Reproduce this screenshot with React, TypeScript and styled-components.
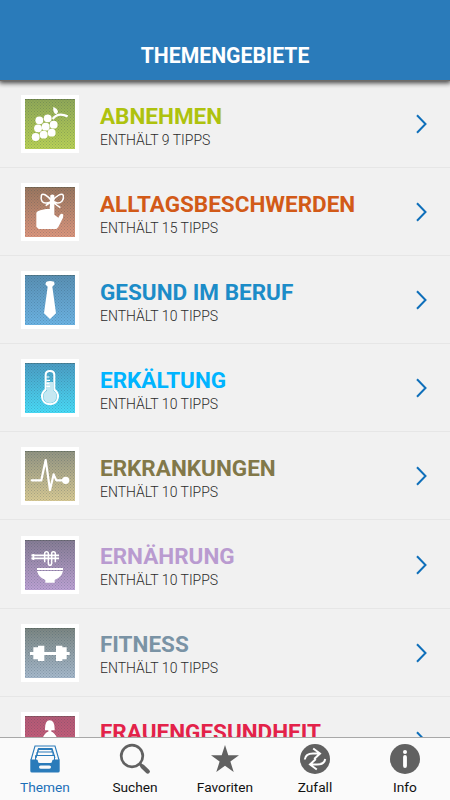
import React from "react";
import styled, { createGlobalStyle } from "styled-components";

const GlobalStyle = createGlobalStyle`
  body { margin: 0; background: #f1f1f1; font-family: Roboto, "Liberation Sans", sans-serif; }
  * { box-sizing: border-box; }
`;

const Screen = styled.div`
  width: 450px;
  height: 800px;
  display: flex;
  flex-direction: column;
  overflow: hidden;
  background: #f1f1f1;
`;

const Header = styled.header`
  flex: none;
  height: 80px;
  padding-top: 42px;
  background: #2a7bba;
  color: #fff;
  text-align: center;
  font-size: 21.2px;
  line-height: 28px;
  font-weight: 700;
  z-index: 1;
  box-shadow: 0 1px 0 #6e6b68, 0 2px 5px 1px rgba(0, 0, 0, 0.75);
`;

const List = styled.main`
  flex: 1;
  min-height: 0;
  overflow: hidden;
`;

const Row = styled.div`
  height: 88.1px;
  display: flex;
  align-items: center;
  padding: 1px 21px 0;
  border-bottom: 1px solid #e6e6e6;
`;

const Tile = styled.svg`
  display: block;
  flex: none;
  width: 58px;
  height: 58px;
`;

const Labels = styled.div`
  flex: 1;
  padding: 4px 0 0 21px;
  white-space: nowrap;
`;

const Title = styled.div<{ $color: string }>`
  color: ${(p) => p.$color};
  font-size: 22.5px;
  line-height: 26px;
  font-weight: 700;
  margin-bottom: 1px;
`;

const Count = styled.div`
  color: #2c2c2c;
  font-size: 14px;
  line-height: 20px;
  font-weight: 300;
`;

const Chevron = styled.svg`
  display: block;
  flex: none;
  width: 14px;
  height: 20px;
  fill: none;
  stroke: #0f6fba;
  stroke-width: 2;
`;

const TabBar = styled.nav`
  flex: none;
  height: 63px;
  display: grid;
  grid-template-columns: repeat(5, 1fr);
  background: #fafafa;
  border-top: 1px solid #a8a8a8;
`;

const Tab = styled.div<{ $active?: boolean }>`
  display: flex;
  flex-direction: column;
  align-items: center;
  padding-top: 4px;
  color: ${(p) => (p.$active ? "#1b6fb8" : "#111")};
  font-size: 13.7px;
  line-height: 18px;
  svg { display: block; width: 34px; height: 34px; margin-bottom: 2px; }
`;

const GRAY = "#616161";

type Topic = {
  id: string;
  title: string;
  count: number;
  color: string;
  top: string;
  bottom: string;
  art: React.ReactNode;
};

const topics: Topic[] = [
  {
    id: "abnehmen", title: "ABNEHMEN", count: 9, color: "#aec20e", top: "#8fa857", bottom: "#b9d255",
    art: (
      <g fill="#fff">
        {[[88, 109], [113, 103], [84, 133], [107, 128], [131, 122], [77, 159], [101, 152], [125, 146]].map(([x, y]) => (
          <circle key={`${x}-${y}`} cx={x} cy={y} r="11.8" />
        ))}
        <path d="M130 68Q141 73 144 82Q144 87 139 91Q128 87 130 68Z" />
        <path d="M128 105Q143 84 173 97" fill="none" stroke="#fff" strokeWidth="7" />
      </g>
    ),
  },
  {
    id: "alltag", title: "ALLTAGSBESCHWERDEN", count: 15, color: "#d25a18", top: "#99765e", bottom: "#dd967d",
    art: (
      <g>
        <path fill="#fff" d="M121 70Q127 65 133 70V128L145 137L150 128Q156 123 160 128L159 137L145 165L139 171H86L79 164V122Q81 117 91 115L108 111H119Z" />
        <path d="M126 88C113 70 97 61 94 71C91 85 98 95 109 93C119 92 122 88 126 88C141 68 157 62 160 71C163 85 152 94 142 93C134 92 132 88 126 88L107 101M127 90L151 107" fill="none" stroke="#fff" strokeWidth="4.5" />
      </g>
    ),
  },
  {
    id: "beruf", title: "GESUND IM BERUF", count: 10, color: "#1c8cc8", top: "#5990b4", bottom: "#6cb4e4",
    art: <path fill="#fff" d="M109 65Q120 61 132 65L134 73L127 80L138 160L120 177L102 160L113 80L106 73Z" />,
  },
  {
    id: "erkaeltung", title: "ERKÄLTUNG", count: 10, color: "#00b4ff", top: "#4b9dc4", bottom: "#48dcf8",
    art: (
      <g>
        <path d="M107 81Q107 69 120 69Q133 69 133 81V125Q145 134 144 147Q142 167 120 169Q98 167 96 147Q95 134 107 125Z" fill="none" stroke="#fff" strokeWidth="6" />
        <path d="M111 102H130V128Q141 135 140 147Q138 164 120 165Q102 164 100 147Q99 135 111 128Z" fill="#c5e8f2" />
        <path d="M109 87H118M109 97H120M109 106H118M109 115H120" stroke="#fff" strokeWidth="3.5" />
      </g>
    ),
  },
  {
    id: "erkrankungen", title: "ERKRANKUNGEN", count: 10, color: "#827849", top: "#929482", bottom: "#d8ca94",
    art: (
      <g>
        <path d="M65 133H94L107 72L120 162L131 115L139 133H163" fill="none" stroke="#fff" strokeWidth="6.5" strokeLinejoin="round" strokeLinecap="round" />
        <circle cx="167" cy="133" r="11" fill="#fff" />
      </g>
    ),
  },
  {
    id: "ernaehrung", title: "ERNÄHRUNG", count: 10, color: "#b99bd0", top: "#867c94", bottom: "#bda2d4",
    art: (
      <g>
        <path fill="#fff" d="M81 129H159V135H81ZM81 138H159Q155 157 134 165V173H106V165Q85 157 81 138Z" />
        <path d="M64 91H147M64 100H147M70 87V105" stroke="#fff" strokeWidth="5.5" />
        <path d="M104 112V86Q104 80 110 80Q115 80 115 86V114Q115 121 120 121Q125 121 125 114V86Q125 80 130 80Q136 80 136 86V112" fill="none" stroke="#fff" strokeWidth="4.5" />
      </g>
    ),
  },
  {
    id: "fitness", title: "FITNESS", count: 10, color: "#7a93a5", top: "#7b8682", bottom: "#a6b9cc",
    art: <path fill="#fff" d="M60 117H70V103H84V98H103V117H138V98H157V103H170V117H179V126H170V139H157V144H138V126H103V144H84V139H70V126H60Z" />,
  },
  {
    id: "frauen", title: "FRAUENGESUNDHEIT", count: 10, color: "#e32249", top: "#b35a75", bottom: "#d75f7e",
    art: <path fill="#fff" d="M105 88Q104 58 119 58Q135 58 134 88H124V92Q136 95 145 120V171H95V120Q102 95 115 92V88Z" />,
  },
];

function TopicTile({ topic }: { topic: Topic }) {
  return (
    <Tile viewBox="33 33 174 174" aria-hidden="true">
      <defs>
        <linearGradient id={`${topic.id}-fill`} x1="0" y1="0" x2="0" y2="1">
          <stop offset="0" stopColor={topic.top} />
          <stop offset="1" stopColor={topic.bottom} />
        </linearGradient>
        <pattern id={`${topic.id}-dots`} width="9" height="9" patternUnits="userSpaceOnUse">
          <path d="M0 0H3V3H0ZM4.5 4.5H7.5V7.5H4.5Z" fill="#244052" fillOpacity=".24" />
        </pattern>
      </defs>
      <path d="M33 33H207V207H33Z" fill="#fff" />
      <path d="M45 45H195V195H45Z" fill={`url(#${topic.id}-fill)`} />
      <path d="M45 45H195V195H45Z" fill={`url(#${topic.id}-dots)`} />
      <path d="M45 46.5H195" stroke="#3c4a3c" strokeOpacity=".3" strokeWidth="3" />
      {topic.art}
    </Tile>
  );
}

function DrawerIcon() {
  return (
    <svg viewBox="0 0 34 34" fill="none" stroke="#2a7bba">
      <path d="M3 18L7 4H27L31 18M8 16L10.5 6.5H24L27 16" strokeWidth="1.1" />
      <path d="M9 13.5V10H25V13.5M7.5 18V13.5H26.5V18M10 10V7.5H24V10" strokeWidth="1" />
      <path d="M2.3 17.5H8.5Q10 17.5 10 19.5Q10 21 12 21H22Q24 21 24 19.5Q24 17.5 26 17.5H31.7V29Q31.7 30.5 30 30.5H4Q2.3 30.5 2.3 29Z" fill="#2a7bba" stroke="none" />
      <rect x="11" y="23.5" width="12" height="3.2" rx="1.6" fill="#fafafa" stroke="none" />
    </svg>
  );
}

function SearchIcon() {
  return (
    <svg viewBox="0 0 34 34" fill="none" stroke={GRAY}>
      <circle cx="14" cy="14" r="10.8" strokeWidth="2.7" />
      <path d="M21.5 21.5L25 25" strokeWidth="3" />
      <path d="M24.5 24.5L29.7 29.5" strokeWidth="4.4" strokeLinecap="round" />
    </svg>
  );
}

function StarIcon() {
  return (
    <svg viewBox="0 0 34 34" fill={GRAY}>
      <path d="M17 3L20.3 13.2H31L22.4 19.6L25.7 30L17 23.7L8.3 30L11.6 19.6L3 13.2H13.7Z" />
    </svg>
  );
}

function ShuffleIcon() {
  return (
    <svg viewBox="0 0 34 34" fill="none" stroke="#fff" strokeWidth="2">
      <circle cx="17" cy="17" r="15" fill={GRAY} stroke="none" />
      <path d="M6.8 17.5Q7.5 11.5 15 11.5H21M15.2 6.5L22 11.5L16.2 17" />
      <path d="M27.2 17Q26.5 22.5 19 22.5H13M18.8 27.5L12 22.5L17.8 17" />
    </svg>
  );
}

function InfoIcon() {
  return (
    <svg viewBox="0 0 34 34">
      <circle cx="17" cy="17" r="15" fill={GRAY} />
      <circle cx="17" cy="10" r="2" fill="#fff" />
      <path d="M17 15V24" stroke="#fff" strokeWidth="3.8" strokeLinecap="round" />
    </svg>
  );
}

export default function App() {
  return (
    <Screen>
      <GlobalStyle />
      <Header>THEMENGEBIETE</Header>
      <List>
        {topics.map((topic) => (
          <Row key={topic.id}>
            <TopicTile topic={topic} />
            <Labels>
              <Title $color={topic.color}>{topic.title}</Title>
              <Count>ENTHÄLT {topic.count} TIPPS</Count>
            </Labels>
            <Chevron viewBox="0 0 14 20"><path d="M2 1.3L10.5 10L2 18.7" /></Chevron>
          </Row>
        ))}
      </List>
      <TabBar>
        <Tab $active><DrawerIcon />Themen</Tab>
        <Tab><SearchIcon />Suchen</Tab>
        <Tab><StarIcon />Favoriten</Tab>
        <Tab><ShuffleIcon />Zufall</Tab>
        <Tab><InfoIcon />Info</Tab>
      </TabBar>
    </Screen>
  );
}
